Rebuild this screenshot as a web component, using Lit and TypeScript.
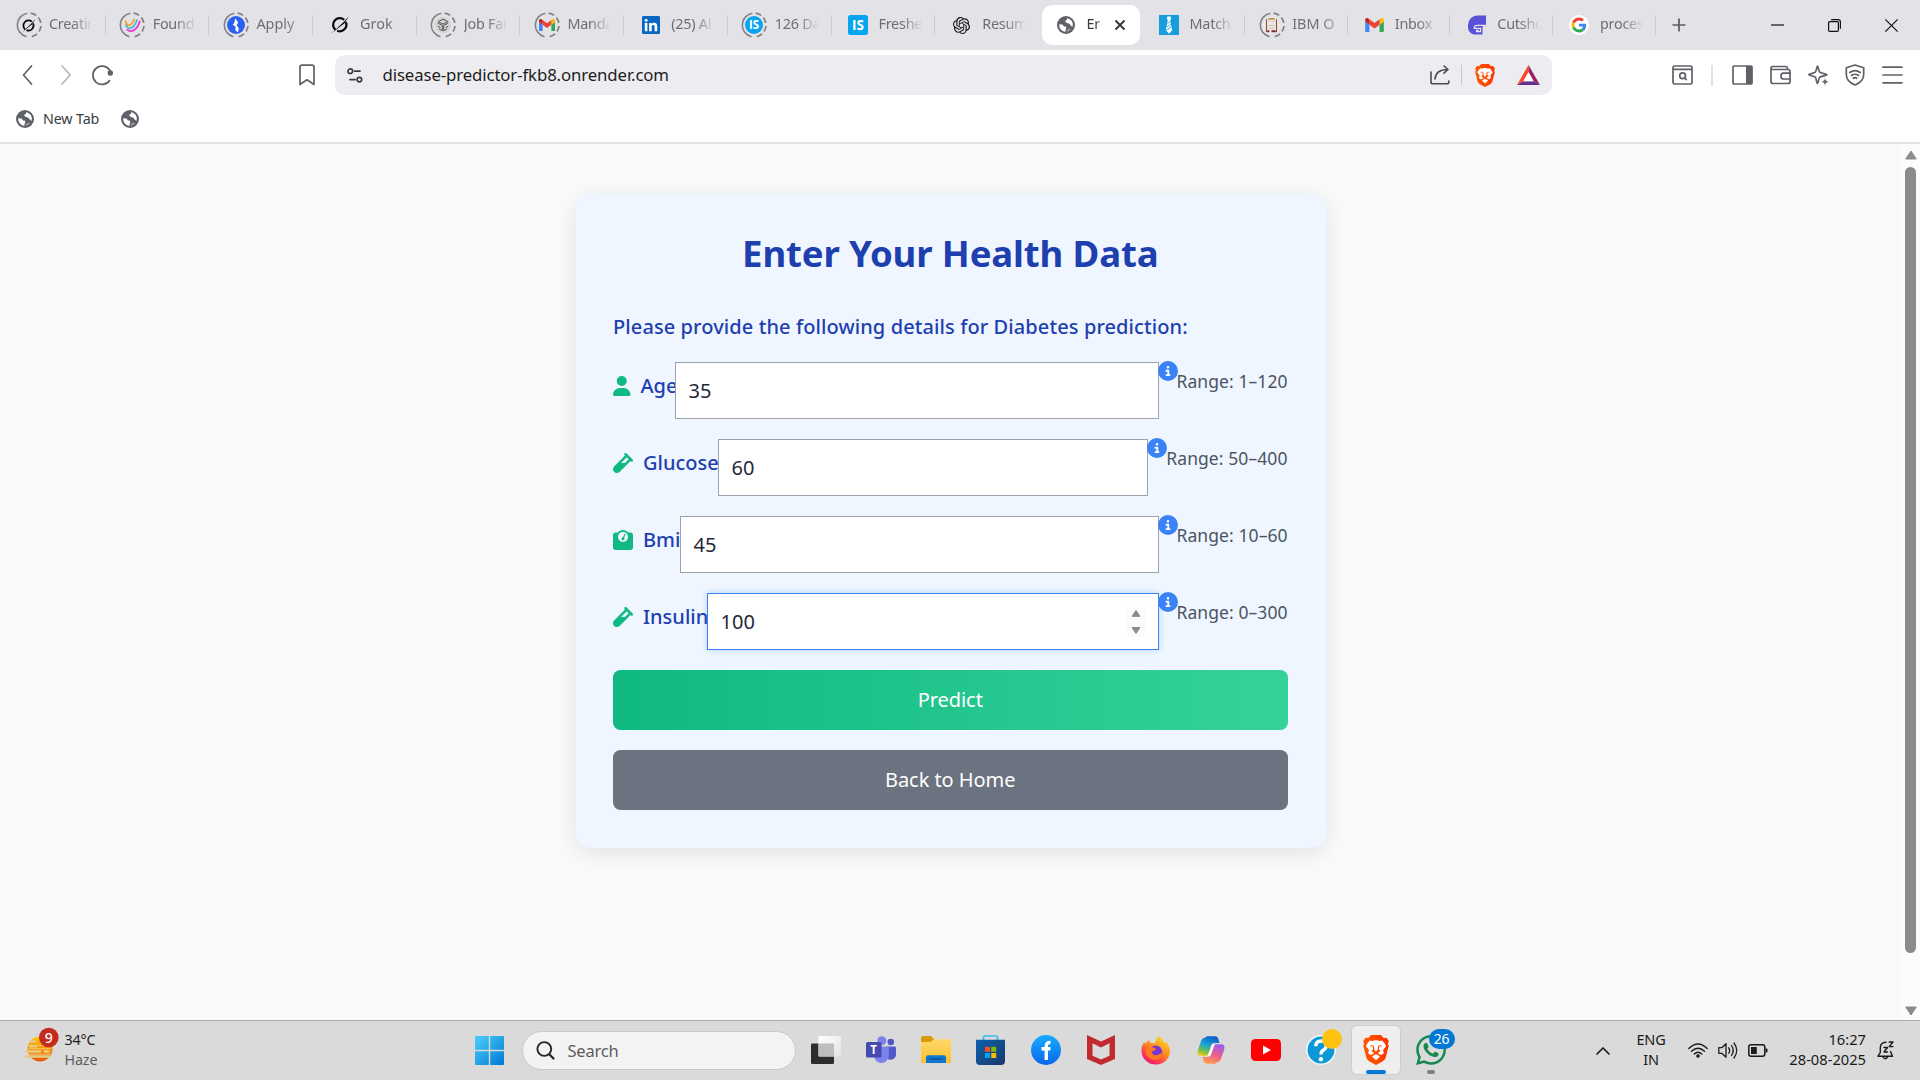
import { LitElement, html, svg, css, TemplateResult, SVGTemplateResult } from "lit";
import { customElement } from "lit/decorators.js";

type Art = SVGTemplateResult;

const icon = (w: number, h: number, box: string, art: Art): TemplateResult =>
  html`<svg class="icon" width=${w} height=${h} viewBox=${box}>${art}</svg>`;

/* ---------- shared artwork ---------- */

const GLOBE: Art = svg`
  <circle cx="9" cy="9" r="9" fill="#5f6168"/>
  <path d="M2.200 8.300 5.400 8.600 7.100 10.600 9.300 10.800 8.900 13.200 8.100 15.900 A7 7 0 0 1 2.200 8.300Z" fill="#fff"/>
  <path d="M10.100 2.200 12 2.800 A7 7 0 0 1 15.900 8 L15.400 10.900 13.500 9.200 12 7.600 9.800 7 8.500 5.800 8 4.700 9.900 4.100Z" fill="#fff"/>
  <path d="M9.800 13.800 12.600 12.400 14.200 13.300 A7 7 0 0 1 9.500 16Z" fill="#fff" opacity=".35"/>`;

const GMAIL: Art = svg`
  <path fill="#4285f4" d="M1.636 18H5.455V8.727L0 4.636V16.364C0 17.27.732 18 1.636 18Z"/>
  <path fill="#34a853" d="M18.545 18h3.819C23.268 18 24 17.268 24 16.364V4.636l-5.455 4.091Z"/>
  <path fill="#fbbc04" d="M18.545 1.636V8.727L24 4.636V2.455C24 .432 21.691-.723 20.073.491Z"/>
  <path fill="#ea4335" d="M5.455 8.727V1.636L12 6.545l6.545-4.909V8.727L12 13.636Z"/>
  <path fill="#c5221f" d="M0 2.455v2.181l5.455 4.091V1.636L3.927.491C2.309-.723 0 .432 0 2.455Z"/>`;

const RING: Art = svg`
  <path d="M12.300 2.200 A12 12 0 0 0 11.500 25.700" fill="none" stroke="#808086" stroke-width="1.600"/>
  <circle cx="14" cy="14" r="12" fill="none" stroke="#808086" stroke-width="1.700" pathLength="100"
    stroke-dasharray="8 4 8 4 8 4 8 100" transform="rotate(-82 14 14)"/>`;

const GROK: Art = svg`
  <path d="M5.300 14.600 A6.400 6.400 0 0 1 13.800 4.700" fill="none" stroke="#0b0b0b" stroke-width="2.200"/>
  <path d="M15.300 6.800 A6.400 6.400 0 0 1 7 15.400" fill="none" stroke="#0b0b0b" stroke-width="2.200"/>
  <path d="M.8 18.600 L12.800 7.200 18.600 .9 13.900 8.200 6.600 13.900Z" fill="#0b0b0b"/>`;

const OPENAI: Art = svg`<path fill="#111" d="M22.2819 9.8211a5.9847 5.9847 0 0 0-.5157-4.9108 6.0462 6.0462 0 0 0-6.5098-2.9A6.0651 6.0651 0 0 0 4.9807 4.1818a5.9847 5.9847 0 0 0-3.9977 2.9 6.0462 6.0462 0 0 0 .7427 7.0966 5.98 5.98 0 0 0 .511 4.9107 6.051 6.051 0 0 0 6.5146 2.9001A5.9847 5.9847 0 0 0 13.2599 24a6.0557 6.0557 0 0 0 5.7718-4.2058 5.9894 5.9894 0 0 0 3.9977-2.9001 6.0557 6.0557 0 0 0-.7475-7.0729zm-9.022 12.6081a4.4755 4.4755 0 0 1-2.8764-1.0408l.1419-.0804 4.7783-2.7582a.7948.7948 0 0 0 .3927-.6813v-6.7369l2.02 1.1686a.071.071 0 0 1 .038.052v5.5826a4.504 4.504 0 0 1-4.4945 4.4944zm-9.6607-4.1254a4.4708 4.4708 0 0 1-.5346-3.0137l.142.0852 4.783 2.7582a.7712.7712 0 0 0 .7806 0l5.8428-3.3685v2.3324a.0804.0804 0 0 1-.0332.0615L9.74 19.9502a4.4992 4.4992 0 0 1-6.1408-1.6464zM2.3408 7.8956a4.485 4.485 0 0 1 2.3655-1.9728V11.6a.7664.7664 0 0 0 .3879.6765l5.8144 3.3543-2.0201 1.1685a.0757.0757 0 0 1-.071 0l-4.8303-2.7865A4.504 4.504 0 0 1 2.3408 7.872zm16.5963 3.8558L13.1038 8.364 15.1192 7.2a.0757.0757 0 0 1 .071 0l4.8303 2.7913a4.4944 4.4944 0 0 1-.6765 8.1042v-5.6772a.79.79 0 0 0-.407-.667zm2.0107-3.0231l-.142-.0852-4.7735-2.7818a.7759.7759 0 0 0-.7854 0L9.409 9.2297V6.8974a.0662.0662 0 0 1 .0284-.0615l4.8303-2.7866a4.4992 4.4992 0 0 1 6.6802 4.66zM8.3065 12.863l-2.02-1.1638a.0804.0804 0 0 1-.038-.0567V6.0742a4.4992 4.4992 0 0 1 7.3757-3.4537l-.142.0805L8.704 5.459a.7948.7948 0 0 0-.3927.6813zm1.0976-2.3654l2.602-1.4998 2.6069 1.4998v2.9994l-2.5974 1.4997-2.6067-1.4997Z"/>`;

const GOOGLE: Art = svg`
  <path fill="#ea4335" d="M24 9.500c3.540 0 6.710 1.220 9.210 3.600l6.850-6.850C35.900 2.380 30.470 0 24 0 14.620 0 6.510 5.380 2.560 13.220l7.980 6.190C12.430 13.720 17.740 9.500 24 9.500z"/>
  <path fill="#4285f4" d="M46.980 24.550c0-1.570-.15-3.090-.38-4.550H24v9.020h12.940c-.58 2.960-2.260 5.480-4.780 7.180l7.730 6c4.510-4.180 7.090-10.360 7.090-17.650z"/>
  <path fill="#fbbc05" d="M10.530 28.590c-.48-1.450-.76-2.990-.76-4.590s.27-3.140.76-4.590l-7.980-6.190C.92 16.460 0 20.120 0 24c0 3.880.92 7.540 2.560 10.780l7.970-6.190z"/>
  <path fill="#34a853" d="M24 48c6.480 0 11.930-2.130 15.890-5.810l-7.730-6c-2.150 1.450-4.920 2.300-8.160 2.300-6.260 0-11.570-4.220-13.470-9.910l-7.980 6.190C6.510 42.620 14.620 48 24 48z"/>`;

/* Brave lion, 26 x 30 */
const BRAVE: Art = svg`
  <defs><linearGradient id="lion" x1="0" y1="0" x2="1" y2="0">
    <stop offset="0" stop-color="#ff5500"/><stop offset=".5" stop-color="#ff4a00"/><stop offset="1" stop-color="#ff2f00"/>
  </linearGradient></defs>
  <path fill="url(#lion)" d="M8 0h10l2.700 3 2.700-.3L25.800 6l-.9 2.500.8 2.400-3 11.700c-.5 1.700-1.500 2.700-2.900 3.700L13 30l-6.800-3.700c-1.400-1-2.400-2-2.900-3.700L.3 10.900l.8-2.400L.2 6l2.400-3.300 2.700.3Z"/>
  <path fill="#fff" d="M13 5.300c.9 0 3.200.7 3.900.6.700 0 2.300-.4 2.300-.4s3.800 4.300 3.800 5.300c0 .9-1.100 1.900-1.800 2.700-.6.600-1.300 1.200-1 2 .2.700.9 1.700.3 2.700-.6 1.100-1.700 1.700-2.500 1.600-.8-.2-2.500-1.100-3-1.600-.3-.4 1.700-1.500 2.700-2.200.2-.2-.8-.9-1.800-1.500-.3-.4.700-2.600.4-3.100-.4-.5-2-.8-3.300-.8s-2.900.3-3.300.8c-.3.500.7 2.700.4 3.100-1 .6-2 1.300-1.800 1.500 1 .7 3 1.800 2.700 2.200-.5.500-2.200 1.400-3 1.600-.8.100-1.900-.5-2.500-1.600-.6-1 .1-2 .3-2.700.3-.8-.4-1.400-1-2-.7-.8-1.800-1.800-1.800-2.700 0-1 3.800-5.300 3.800-5.300s1.600.4 2.300.4c.7.1 3-.6 3.900-.6Z"/>
  <path fill="#fff" d="M10.600 9.800 15.400 9.800 14.500 15 13 16.700 11.500 15Z"/>
  <path fill="#fff" d="M13 19.300c.9.400 3.200 1.600 3.600 2 .3.300.1.600-.1.800L13 25.300l-3.500-3.200c-.2-.2-.4-.5-.1-.8.400-.4 2.700-1.600 3.600-2Z"/>
  <path d="M7.200 11.200c1.200-.7 2.300-.6 3.400 0M18.800 11.200c-1.200-.7-2.300-.6-3.400 0" fill="none" stroke="#ff4a00" stroke-width="1"/>`;

/* ---------- tab strip ---------- */

interface Tab { label: string; art: TemplateResult; ringed?: boolean; active?: boolean; bare?: boolean; whole?: boolean; }

const tabs: Tab[] = [
  { label: "Creatin", ringed: true, art: icon(15, 15, "0 0 19 19", GROK) },
  { label: "Found", ringed: true, art: icon(17, 17, "0 0 18 18", svg`
      <path d="M1.500 3.500C3 11.500 7.500 10 11 2" fill="none" stroke="#f8a51b" stroke-width="1.900"/>
      <path d="M1.500 8C4.500 15 10.500 12.500 14 2.500" fill="none" stroke="#3fb3ea" stroke-width="1.700"/>
      <path d="M3 13.200C7.500 17.500 14.500 13.500 16.800 4" fill="none" stroke="#e838c9" stroke-width="1.900"/>`) },
  { label: "Apply", ringed: true, whole: true, art: icon(18, 18, "0 0 18 18", svg`
      <circle cx="9" cy="9" r="9" fill="#2a5ff0"/>
      <path d="M8.300 2.300 7 7.400 5.600 8.500 8.600 10.800 8.400 14.500 11 16.200 11.800 12.200 9.600 9.300 11.200 6.400Z" fill="#fff"/>`) },
  { label: "Grok", whole: true, art: icon(20, 20, "0 0 19.500 19.500", GROK) },
  { label: "Job Fai", ringed: true, art: icon(16, 16, "0 0 16 16", svg`
      <circle cx="8" cy="8" r="8" fill="#d3d3d3"/>
      <path d="M8 2.200 12.800 4.600 8 7.200 3.200 4.600ZM2.800 6 7.300 8.500V13.800L4 11.800M13.200 6 8.700 8.500V13.800L12 11.800M2.800 9.200 5.400 10.600M13.200 9.200 10.600 10.600" fill="none" stroke="#555" stroke-width="1"/>`) },
  { label: "Manda", ringed: true, art: icon(16, 12, "0 0 24 18", GMAIL) },
  { label: "(25) Al", art: icon(18, 18, "0 0 18 18", svg`
      <rect width="18" height="18" rx="1.200" fill="#0a66c2"/>
      <circle cx="4.100" cy="4.300" r="1.500" fill="#fff"/><rect x="2.800" y="6.900" width="2.600" height="8.300" fill="#fff"/>
      <path d="M7.100 6.900h2.500V8c.5-.8 1.400-1.300 2.500-1.300 2.500 0 3.100 1.600 3.100 3.800v4.700h-2.600V11c0-1-.1-2.100-1.400-2.100S9.700 9.900 9.700 11v4.200H7.100Z" fill="#fff"/>`) },
  { label: "126 Da", ringed: true, art: icon(18, 18, "0 0 18 18", svg`
      <circle cx="9" cy="9" r="9" fill="#07a5f0"/><text x="9" y="13.200" class="glyph" font-size="11.500">IS</text>`) },
  { label: "Freshe", art: icon(20, 20, "0 0 20 20", svg`
      <rect width="20" height="20" rx="2.500" fill="#07a5f0"/><text x="10" y="15" class="glyph" font-size="13.500">IS</text>`) },
  { label: "Resum", bare: true, art: icon(17, 17, "0 0 24 24", OPENAI) },
  { label: "Er", active: true, art: icon(18, 18, "0 0 18 18", GLOBE) },
  { label: "Match", art: icon(20, 20, "0 0 20 20", svg`
      <rect width="20" height="20" fill="#179cdc"/>
      <path d="M8.400 1.500h3.200l.6 2-1 1.700 1.900 10L10 18.700 6.900 15.200l1.900-10-1-1.700Z" fill="#fff"/>
      <path d="M8.600 8.600 11.400 6.200M8 12.200 12 8.900M7.400 15.500 12.400 11.600" stroke="#179cdc" stroke-width=".9"/>`) },
  { label: "IBM O", ringed: true, whole: true, art: icon(17, 17, "0 0 16 16", svg`
      <circle cx="8" cy="8" r="8" fill="#efe9e4"/>
      <path d="M3.300 2V14M12.700 2V14" stroke="#8b4a46" stroke-width="1"/>
      <path d="M5 4.200h2M9 4.200h2M5 8h6M5.500 10.500h5" stroke="#cdb8a4" stroke-width=".9"/>
      <path d="M4 13.500h2M8 13.500h4" stroke="#7d2a2e" stroke-width="1.900"/><path d="M5 1.800h6" stroke="#b98b3c" stroke-width="1.500"/>`) },
  { label: "Inbox", art: icon(19, 14, "0 0 24 18", GMAIL) },
  { label: "Cutsho", art: icon(18, 20, "0 0 18 20", svg`
      <path d="M18 .5H9.500A9.500 9.500 0 0 0 0 10V12.500A7 7 0 0 0 7 19.500H14.500V11.500H18Z" fill="#5850d6"/>
      <path d="M18 10.300H9.300Q6.300 10.300 6.300 12.800V13.300H12.500V16.700H8.500V15.300H10.800" fill="none" stroke="#e3e2e7" stroke-width="1.300"/>
      <path d="M18 11.100H15V20H18Z" fill="#e3e2e7"/>`) },
  { label: "proces", art: icon(20, 20, "-8 -8 64 64", svg`<circle cx="24" cy="24" r="32" fill="#fff"/>${GOOGLE}`) },
];

/* ---------- form data ---------- */

const PERSON = icon(17.5, 20, "0 0 448 512", svg`<path fill="#10b981" d="M224 256A128 128 0 1 0 224 0a128 128 0 1 0 0 256zm-45.700 48C79.800 304 0 383.800 0 482.300C0 498.700 13.300 512 29.700 512H418.300c16.400 0 29.700-13.300 29.700-29.700C448 383.800 368.200 304 269.700 304H178.300z"/>`);
const VIAL = icon(20, 20, "0 0 512 512", svg`<path fill="#10b981" d="M342.600 9.400c-12.500-12.500-32.800-12.500-45.300 0s-12.500 32.800 0 45.300l9.400 9.400L28.100 342.600C10.100 360.600 0 385 0 410.500V416c0 53 43 96 96 96h5.500c25.500 0 49.900-10.100 67.900-28.100L448 205.300l9.400 9.400c12.500 12.500 32.800 12.500 45.300 0s12.500-32.800 0-45.300l-32-32-96-96-32-32zM205.300 256L352 109.300 402.700 160l-96 96H205.300z"/>`);
const SCALE = icon(20, 20, "0 0 512 512", svg`<path fill="#10b981" d="M128 176a128 128 0 1 1 256 0 128 128 0 1 1 -256 0zM391.800 64C359.500 24.900 310.700 0 256 0S152.500 24.900 120.200 64H64C28.700 64 0 92.700 0 128V448c0 35.300 28.700 64 64 64H448c35.300 0 64-28.700 64-64V128c0-35.300-28.700-64-64-64H391.800zM296 224c0-10.600-4.100-20.200-10.900-27.400l33.600-78.300c3.500-8.100-.3-17.500-8.400-21s-17.500 .3-21 8.400L255.700 184c-22 .1-39.700 18-39.700 40c0 22.100 17.900 40 40 40s40-17.900 40-40z"/>`);
const INFO = icon(20, 20, "0 0 512 512", svg`<circle cx="256" cy="256" r="240" fill="#fff"/><path fill="#3b82f6" d="M256 512A256 256 0 1 0 256 0a256 256 0 1 0 0 512zM216 336h24V272H216c-13.300 0-24-10.700-24-24s10.700-24 24-24h48c13.300 0 24 10.700 24 24v88h8c13.300 0 24 10.700 24 24s-10.700 24-24 24H216c-13.300 0-24-10.700-24-24s10.700-24 24-24zm40-208a32 32 0 1 1 0 64 32 32 0 1 1 0-64z"/>`);

const fields = [
  { name: "Age", value: "35", range: "Range: 1–120", kind: "age", art: PERSON },
  { name: "Glucose", value: "60", range: "Range: 50–400", kind: "glucose", art: VIAL },
  { name: "Bmi", value: "45", range: "Range: 10–60", kind: "bmi", art: SCALE },
  { name: "Insulin", value: "100", range: "Range: 0–300", kind: "insulin", art: VIAL },
];

/* ---------- taskbar apps ---------- */

const START = icon(29, 29, "0 0 29 29", svg`
  <defs><linearGradient id="win" x1="0" y1="0" x2="1" y2="1" gradientUnits="objectBoundingBox">
    <stop offset="0" stop-color="#4cd0fb"/><stop offset="1" stop-color="#0078d4"/></linearGradient>
    <mask id="panes"><path d="M0 1Q0 0 1 0H13.800V13.800H0ZM15.200 0H28Q29 0 29 1V13.800H15.200ZM0 15.200H13.800V29H1Q0 29 0 28ZM15.200 15.200H29V28Q29 29 28 29H15.200Z" fill="#fff"/></mask></defs>
  <rect width="29" height="29" fill="url(#win)" mask="url(#panes)"/>`);

const apps: { art: TemplateResult; kind?: string }[] = [
  { art: icon(30, 29, "0 0 30 29", svg`
      <defs><linearGradient id="tvw" x1="0" y1="0" x2="1" y2="1"><stop offset="0" stop-color="#fff"/><stop offset="1" stop-color="#e2e2e2"/></linearGradient></defs>
      <rect x="0" y="7.500" width="23" height="20.500" rx="1.200" fill="#2c2c2a"/>
      <rect x="7.500" y="0" width="22.500" height="20.500" rx="1.200" fill="url(#tvw)"/>
      <path d="M7.500 7.500H23V20.500H8.500Q7.500 20.500 7.500 19.500Z" fill="#bdbdbd"/>`) },
  { art: icon(30, 28, "0 0 30 28", svg`
      <circle cx="24.800" cy="6" r="3.300" fill="#5059c9"/><path d="M20 10.500h8.500q1.500 0 1.500 1.500v6.500a5.500 5.500 0 0 1-9 4Z" fill="#5059c9"/>
      <circle cx="15.800" cy="4.700" r="4.500" fill="#7b83eb"/><path d="M9 10.500h12.500q1.300 0 1.300 1.500v7.500a7.400 7.400 0 0 1-14.800 0Z" fill="#7b83eb"/>
      <rect x="0" y="6" width="15.500" height="15.500" rx="1.500" fill="#4649b0"/><text x="7.700" y="17.800" class="glyph" font-size="11.500">T</text>`) },
  { art: icon(30, 28, "0 0 30 28", svg`
      <defs><linearGradient id="fold" x1="0" y1="0" x2="0" y2="1"><stop offset="0" stop-color="#ffd96b"/><stop offset="1" stop-color="#fbbf2d"/></linearGradient></defs>
      <path d="M0 2Q0 0 2 0H10L13 3V8H0Z" fill="#d99a0b"/><path d="M0 6H9.500L13 3.200H30V27H0Z" fill="url(#fold)"/>
      <path d="M5 27V21.500Q5 19.300 7.200 19.300H22.800Q25 19.300 25 21.500V27Z" fill="#0f78ce"/><path d="M8.500 23H21.500" stroke="#0a4f94" stroke-width="1.300"/>`) },
  { art: icon(29, 30, "0 0 29 30", svg`
      <defs><linearGradient id="bag" x1="0" y1="0" x2="1" y2="1"><stop offset="0" stop-color="#0b62ad"/><stop offset="1" stop-color="#1b3768"/></linearGradient></defs>
      <path d="M7.500 6V2.500Q7.500 1 9 1H20Q21.500 1 21.500 2.500V6" fill="none" stroke="#33bdf2" stroke-width="1.700"/>
      <path d="M0 4.700H29V26Q29 30 25 30H4Q0 30 0 26Z" fill="url(#bag)"/>
      <path d="M9 11.800H14V16.800H9Z" fill="#f25022"/><path d="M15.200 11.800H20.200V16.800H15.200Z" fill="#7fba00"/>
      <path d="M9 18H14V23H9Z" fill="#00a4ef"/><path d="M15.200 18H20.200V23H15.200Z" fill="#ffb900"/>`) },
  { art: icon(30, 30, "0 0 30 30", svg`
      <defs><linearGradient id="fb" x1="0" y1="0" x2="0" y2="1"><stop offset="0" stop-color="#18acfe"/><stop offset="1" stop-color="#0866ea"/></linearGradient></defs>
      <circle cx="15" cy="15" r="15" fill="url(#fb)"/>
      <path d="M15.300 25V11Q15.300 7.300 19.500 7.500M10.500 13.800H19.500" fill="none" stroke="#fff" stroke-width="3.400"/>`) },
  { art: icon(28, 30, "0 0 28 30", svg`
      <path d="M0 0 14 6.500 28 0V24L14 30 0 24ZM5.500 8.300V20.800L14 24.500 22.500 20.800V8.300L14 12.500Z" fill="#c12a2e" fill-rule="evenodd"/>`) },
  { art: icon(29, 29, "0 0 29 29", svg`
      <defs><linearGradient id="fx" x1=".8" y1="0" x2=".2" y2="1"><stop offset="0" stop-color="#ffe12e"/><stop offset=".45" stop-color="#ff8a1c"/><stop offset=".8" stop-color="#fb2f55"/><stop offset="1" stop-color="#e31587"/></linearGradient></defs>
      <path d="M18 .300C21 2 22.600 4.500 23 7 24 6.900 24.700 6.300 25 5.500 28 9 29 12.500 29 15.500A14.300 14 0 0 1 .5 16C0 11.500 1.500 8 3.500 6 3.600 7 4 7.600 4.600 8 5.500 5.800 7 4.600 8.600 4.200 8.600 5.800 9.400 7 11 7.200 14 7.500 14.500 6 15 4.500 15.500 2.600 16.500 1 18 .300Z" fill="url(#fx)"/>
      <circle cx="14.700" cy="16" r="6.500" fill="#7a35d8"/>
      <path d="M5 12.500C8.500 10 13.500 11.200 15.500 13.500 12.500 13.800 12.200 15.500 10.500 16.200 12 20 17 20.500 20.500 16.500 21.500 22.500 15 25.500 10 23.200 6 21.200 4.500 17 5 12.500Z" fill="#ff7a1c"/>`) },
  { art: icon(28, 28, "0 0 28 28", svg`
      <defs><linearGradient id="cpa" x1=".6" y1="0" x2=".2" y2="1"><stop offset="0" stop-color="#0f5fc9"/><stop offset=".45" stop-color="#18a5d6"/><stop offset=".75" stop-color="#6fbf4b"/><stop offset="1" stop-color="#f2c80f"/></linearGradient>
      <linearGradient id="cpb" x1=".7" y1="0" x2=".3" y2="1"><stop offset="0" stop-color="#9d5cf0"/><stop offset=".5" stop-color="#ec5f8c"/><stop offset="1" stop-color="#ff9d4a"/></linearGradient></defs>
      <path d="M8.500 1.500Q9 .3 11 .3H18Q20.500.3 21.300 2.700L22.500 7H17Q14.800 7 14 9.500L11.800 17.500Q11.200 19.700 9 19.700H4Q-.5 19.700 .8 14.500L4 5Q5 2 8.500 1.500Z" fill="url(#cpa)"/>
      <path d="M19.500 26.500Q19 27.700 17 27.700H10Q7.500 27.700 6.700 25.300L5.500 21H11Q13.200 21 14 18.500L16.200 10.500Q16.800 8.300 19 8.300H24Q28.500 8.300 27.200 13.500L24 23Q23 26 19.500 26.500Z" fill="url(#cpb)"/>
      <path d="M15.300 8.300H18L13.500 19.700H10.300Z" fill="#fff" opacity=".8"/>`) },
  { art: icon(30, 22, "0 0 30 22", svg`
      <rect width="30" height="22" rx="4.500" fill="#f00"/><path d="M12 6.500 20 11 12 15.500Z" fill="#fff"/>`) },
  { kind: "help", art: icon(30, 30, "0 0 30 30", svg`
      <circle cx="15" cy="15" r="14.200" fill="#0c97d6" stroke="#f1f8fc" stroke-width="1.600"/>
      <path d="M9.800 11.200Q9.800 6 15 6T20.200 10.700Q20.200 13.500 17.200 15.200 15 16.500 15 19.500" fill="none" stroke="#fff" stroke-width="3.400"/><circle cx="14.900" cy="24.300" r="2.200" fill="#fff"/>`) },
  { kind: "current", art: icon(26, 30, "0 0 26 30", BRAVE) },
  { kind: "chat", art: icon(30, 30, "0 0 24 24", svg`<path fill="#15894f" d="M17.472 14.382c-.297-.149-1.758-.867-2.030-.967-.273-.099-.471-.148-.67.15-.197.297-.767.966-.94 1.164-.173.199-.347.223-.644.075-.297-.15-1.255-.463-2.390-1.475-.883-.788-1.480-1.761-1.653-2.059-.173-.297-.018-.458.13-.606.134-.133.298-.347.446-.52.149-.174.198-.298.298-.497.099-.198.05-.371-.025-.52-.075-.149-.669-1.612-.916-2.207-.242-.579-.487-.5-.669-.51-.173-.008-.371-.01-.57-.01-.198 0-.52.074-.792.372-.272.297-1.040 1.016-1.040 2.479 0 1.462 1.065 2.875 1.213 3.074.149.198 2.096 3.200 5.077 4.487.709.306 1.262.489 1.694.625.712.227 1.360.195 1.871.118.571-.085 1.758-.719 2.006-1.413.248-.694.248-1.289.173-1.413-.074-.124-.272-.198-.57-.347m-5.421 7.403h-.004a9.870 9.870 0 01-5.031-1.378l-.361-.214-3.741.982.998-3.648-.235-.374a9.860 9.860 0 01-1.510-5.260c.001-5.450 4.436-9.884 9.888-9.884 2.640 0 5.122 1.030 6.988 2.898a9.825 9.825 0 012.893 6.994c-.003 5.450-4.437 9.884-9.885 9.884m8.413-18.297A11.815 11.815 0 0012.050 0C5.495 0 .16 5.335.157 11.892c0 2.096.547 4.142 1.588 5.945L.057 24l6.305-1.654a11.882 11.882 0 005.683 1.448h.005c6.554 0 11.890-5.335 11.893-11.893a11.821 11.821 0 00-3.480-8.413Z"/>`) },
];

@customElement("app-root")
export class AppRoot extends LitElement {
  static styles = css`
    :host { display: block; font-family: "Noto Sans", "Open Sans", sans-serif; color: #1f2023; }
    * { box-sizing: border-box; }
    .screen { width: 1920px; height: 1080px; display: flex; flex-direction: column; overflow: hidden; }
    .icon { display: block; flex: none; overflow: visible; }
    .line { fill: none; stroke: #5f6168; stroke-width: 1.7; stroke-linecap: round; stroke-linejoin: round; }
    .glyph { fill: #fff; font-family: "Open Sans", sans-serif; font-weight: 700; text-anchor: middle; }

    .tabs { height: 50px; flex: none; display: flex; align-items: center; background: #e3e2e7; padding-left: 2px; }
    .tab { width: 103.700px; height: 40px; flex: none; display: flex; align-items: center; padding-left: 12.500px; }
    .tab.late { width: 102.600px; }
    .tab.edge { border-right: 1.500px solid #cbcace; height: 20px; }
    .fav { width: 28px; height: 28px; display: grid; place-items: center; flex: none; }
    .fav > * { grid-area: 1 / 1; }
    .title { margin: 0 0 2px 6.500px; width: 46px; white-space: nowrap; font-size: 14.400px; letter-spacing: -0.250px; line-height: 22px; color: #6e6f73;
      -webkit-mask-image: linear-gradient(90deg, #000 50%, transparent 96%); mask-image: linear-gradient(90deg, #000 50%, transparent 96%); }
    .title.whole { letter-spacing: 0; -webkit-mask-image: linear-gradient(90deg, #000 60%, transparent 125%); mask-image: linear-gradient(90deg, #000 60%, transparent 125%); }
    .active { width: 98px; height: 40px; margin: 0 2.700px 0 3px; padding-left: 10px; background: #fff; border-radius: 10px; }
    .active .title { width: 16px; color: #3a3b3f; -webkit-mask-image: linear-gradient(90deg, #000 60%, transparent 115%); mask-image: linear-gradient(90deg, #000 60%, transparent 115%); }
    .active .close { margin-left: 12px; }
    .plus { margin-left: 16px; }
    .win { margin-left: auto; display: flex; align-items: center; gap: 44px; padding-right: 22px; }

    .bar { height: 50px; flex: none; display: flex; align-items: center; background: #fff; padding-left: 22px; }
    .fwd { margin-left: 28px; }
    .reload { margin-left: 20px; }
    .mark { margin-left: 186px; }
    .url { width: 1217px; height: 40px; margin-left: 20px; border-radius: 10px; background: #ededf1; display: flex; align-items: center; padding-left: 12px; }
    .address { margin-left: 19.500px; font-size: 16.800px; letter-spacing: -0.120px; line-height: 26px; color: #1d1d22; flex: 1; padding-bottom: 1px; }
    .sep { width: 1.500px; height: 20px; background: #c6c6cb; margin: 0 13px 0 11px; }
    .bat { margin: 0 12px 0 22px; }
    .find { margin-left: 120px; }
    .sep.soft { width: 2px; margin: 0 19px 0 18px; background: #e2e1e7; height: 21px; }
    .tools { display: flex; align-items: center; gap: 16.800px; }

    .marks { height: 44px; flex: none; display: flex; align-items: center; background: #fff; border-bottom: 2px solid #e2e1e7; padding: 0 0 5px 16px; font-size: 14.300px; color: #3c3d41; }
    .marks span { margin: 0 22px 0 9px; letter-spacing: -0.150px; }

    .page { flex: 1; min-height: 0; display: flex; background: #f9fafc; }
    .body { flex: 1; display: flex; justify-content: center; align-items: flex-start; padding-top: 50px; }
    .card { width: 750px; height: 654px; padding: 35px 38px 0 37.500px; border-radius: 15px; background: #eff6ff; box-shadow: 0 5px 25px rgba(0, 0, 0, 0.100); }
    h1 { margin: 0; text-align: center; font-size: 36.600px; line-height: 48px; letter-spacing: -0.150px; font-weight: 700; color: #1e40af; }
    .lead { margin: 35px 0 20px; font-size: 20px; line-height: 30px; font-weight: 500; letter-spacing: 0.100px; color: #1e40af; white-space: nowrap; }
    .row { display: flex; align-items: flex-start; height: 57px; margin-bottom: 20px; }
    .label { flex: none; display: flex; align-items: center; gap: 10px; margin-top: 9px; font-size: 20px; font-weight: 500; line-height: 30px; color: #1e40af; white-space: nowrap; }
    .label .icon { margin-bottom: 1px; }
    .age .label { width: 61.500px; } .glucose .label { width: 104.500px; } .bmi .label { width: 66.500px; } .insulin .label { width: 93.500px; }
    .input { flex: 1; height: 57px; display: flex; align-items: center; justify-content: space-between; background: #fff; border: 1px solid #9ca3af; padding: 0 13px 0 13px; font-size: 20px; line-height: 30px; color: #1f2937; }
    .insulin .input { border-color: #3b82f6; box-shadow: 0 0 6px rgba(59, 130, 246, 0.300); }
    .spin { display: block; background: #fbfbfb; }
    .info { width: 18px; flex: none; margin-top: -1px; }
    .info .icon { margin-left: -1px; }
    .range { flex: none; width: 111px; margin-top: 5.500px; font-size: 17.500px; letter-spacing: 0.080px; line-height: 26px; color: #4b5563; text-align: right; white-space: nowrap; }
    .glucose .range { width: 121.500px; }
    .btn { height: 60px; border-radius: 7.500px; display: flex; align-items: center; justify-content: center; font-size: 20px; line-height: 30px; color: #fff; margin-bottom: 20px; letter-spacing: -0.050px; }
    .go { background: linear-gradient(90deg, #10b981, #34d399); }
    .home { background: #6b7280; }
    .scroll { width: 19px; flex: none; background: #fcfcfc; display: flex; flex-direction: column; align-items: center; padding: 6px 0 4px; }
    .thumb { width: 11px; height: 786px; margin-top: 7px; border-radius: 6px; background: #8b8b8b; }
    .scroll .down { margin-top: auto; }

    .task { height: 60px; flex: none; display: flex; align-items: center; background: #dadada; border-top: 1px solid #aaabad; padding-bottom: 1px; }
    .weather { width: 460.500px; flex: none; padding-left: 25px; display: flex; align-items: center; font-size: 14.300px; line-height: 20px; letter-spacing: -0.150px; }
    .weather .icon { margin-bottom: 10px; }
    .grey { color: #5c5c5c; }
    .weather .words { margin: 0 0 0 5.500px; }
    .start { width: 61px; padding-left: 14.500px; flex: none; }
    .search { width: 274px; height: 39px; flex: none; border-radius: 20px; background: #f3f3f3; border: 1px solid #c9c9c9; display: flex; align-items: center; padding-left: 13px; font-size: 16.500px; color: #5d5d5d; letter-spacing: -0.200px; }
    .search span { margin-left: 13px; }
    .apps { display: flex; gap: 7px; margin-left: 6px; }
    .app { width: 48px; height: 48px; display: grid; place-items: center; border-radius: 5px; position: relative; }
    .current { background: #eeeeee; box-shadow: 0 0 0 1px rgba(0, 0, 0, 0.050); }
    .current::after { content: ""; position: absolute; left: 14px; bottom: 0; width: 20px; height: 4px; border-radius: 2px; background: #0078d4; }
    .chat::after { content: ""; position: absolute; left: 20px; bottom: 0; width: 8px; height: 4px; border-radius: 2px; background: #7f7f7f; }
    .help::after { content: ""; position: absolute; left: 25px; top: 3px; width: 20px; height: 20px; border-radius: 50%; background: #ffc20e; }
    .badge { position: absolute; left: 22px; top: 3px; width: 26px; height: 20px; border-radius: 10px; background: #0078d4; color: #fff; font-size: 14px; line-height: 20px; text-align: center; letter-spacing: -0.300px; }
    .tray { margin-left: auto; padding-right: 26px; display: flex; align-items: center; font-size: 14.500px; line-height: 20px; color: #1b1b1b; }
    .lang { width: 40px; margin: 0 17px 2px 21px; text-align: center; letter-spacing: -0.200px; }
    .net { display: flex; align-items: center; gap: 10px; }
    .clock { width: 90px; margin: 0 11px 2px 8px; text-align: right; font-size: 14.700px; white-space: nowrap; }
  `;

  private tab(t: Tab, i: number) {
    const edge = !t.active && !t.bare;
    if (t.active) {
      return html`<div class="tab active">
        <span class="fav">${t.art}</span><span class="title">${t.label}</span>
        <svg class="icon close" width="12" height="12" viewBox="0 0 12 12"><path d="M1.500 1.500 10.500 10.500M10.500 1.500 1.500 10.500" stroke="#34353a" stroke-width="1.900"/></svg>
      </div>`;
    }
    return html`<div class="tab ${i > 10 ? "late" : ""} ${edge ? "edge" : ""}">
      <span class="fav">${t.art}${t.ringed ? icon(28, 28, "0 0 28 28", RING) : ""}</span>
      <span class="title ${t.whole ? "whole" : ""}">${t.label}</span>
    </div>`;
  }

  private toolbar() {
    return html`<div class="bar">
      ${icon(11, 20, "0 0 11 20", svg`<path class="line" d="M9.500 1 1.500 10 9.500 19"/>`)}
      <span class="fwd">${icon(11, 20, "0 0 11 20", svg`<path class="line" opacity=".45" d="M1 1 9.200 10 1 19"/>`)}</span>
      <span class="reload">${icon(21, 20, "0 0 21 20", svg`<path class="line" d="M17.600 15.600A9.200 9.200 0 1 1 17.800 5.200"/><circle cx="18.300" cy="8" r="2.700" fill="#5f6168"/>`)}</span>
      <span class="mark">${icon(16, 22, "0 0 16 22", svg`<path class="line" d="M3 1.200H13Q15 1.200 15 3.200V20.500L8 15.800 1 20.500V3.200Q1 1.200 3 1.200Z"/>`)}</span>
      <div class="url">
        ${icon(16, 15, "0 0 16 15", svg`<g fill="none" stroke="#3a3b40" stroke-width="1.700" stroke-linecap="round"><circle cx="3.300" cy="3.200" r="2.300"/><path d="M7.600 3.200H13"/><circle cx="12.400" cy="11.600" r="2.300"/><path d="M3 11.600H8.200"/></g>`)}
        <span class="address">disease-predictor-fkb8.onrender.com</span>
        ${icon(20, 20, "0 0 20 20", svg`<g fill="none" stroke="#4a4b50" stroke-width="1.600" stroke-linecap="round" stroke-linejoin="round"><path d="M1 7V17Q1 18.800 2.800 18.800H17Q18.800 18.800 18.800 17V16"/><path d="M5 14C5.500 8 9.500 4.500 17.500 4.500M14 1 18 4.500 14 8.200"/></g>`)}
        <span class="sep"></span>
        ${icon(20, 23, "0 0 26 30", BRAVE)}
        <span class="bat">${icon(23, 20, "0 0 23 20", svg`<path d="M11.500 0 0 20 6.300 16.200 11.500 7Z" fill="#ff4724"/><path d="M11.500 0 23 20 16.500 16.200 11.500 7Z" fill="#9e1f63"/><path d="M0 20H23L16.500 16.200H6.300Z" fill="#662d91"/><path d="M11.500 7.200 16.600 16.200H6.400Z" fill="#fff"/>`)}</span>
      </div>
      <span class="find">${icon(21, 20, "0 0 21 20", svg`<rect class="line" x="1" y="1" width="19" height="18" rx="1.500"/><path class="line" d="M1.500 4.300H19.500"/><circle class="line" cx="10.600" cy="10.800" r="2.900"/><path class="line" d="M12.800 13 14.300 14.700"/>`)}</span>
      <span class="sep soft"></span>
      <div class="tools">
        ${icon(21, 20, "0 0 21 20", svg`<rect class="line" x="1" y="1" width="19" height="18" rx="1"/><path d="M14 1H20V19H14Z" fill="#5f6168"/>`)}
        ${icon(21, 20, "0 0 21 20", svg`<path class="line" d="M17.500 4.500V3.500Q17.500 1.500 15.500 1.500H2.500Q1 1.500 1 3T2.500 4.500H18Q20 4.500 20 6.500V16.500Q20 18.500 18 18.500H3Q1 18.500 1 16.500V3"/><path class="line" d="M20 8.200H13.500Q11 8.200 11 10.700V11.500Q11 14 13.500 14H20"/>`)}
        ${icon(21, 21, "0 0 21 21", svg`<path class="line" d="M9.500 1C10.300 1 10.500 6 11.700 7.200S19 8.800 19 9.700 13 11 11.700 12.200 10.500 18.500 9.500 18.500 8.500 13.500 7.300 12.200 .8 10.600 .8 9.700 6 8.500 7.300 7.200 8.700 1 9.500 1Z"/><path d="M17 12.800 18.200 15.600 21 16.800 18.200 18 17 21 15.800 18 13 16.800 15.800 15.600Z" fill="#5f6168" stroke="#fff" stroke-width=".6"/>`)}
        ${icon(20, 22, "0 0 20 22", svg`<path class="line" d="M10 1 18.700 3.800V10.500Q18.700 17.500 10 21 1.300 17.500 1.300 10.500V3.800Z"/><path class="line" d="M4.800 8.500Q10 4.800 15.200 8.500M6.500 11.500Q10 9 13.500 11.500M8.300 14.300Q10 13 11.700 14.300"/>`)}
        ${icon(21, 18, "0 0 21 18", svg`<path class="line" d="M1 1.200H20M1 9H20M1 16.800H20"/>`)}
      </div>
    </div>`;
  }

  private taskbar() {
    return html`<div class="task">
      <div class="weather">
        ${icon(34, 36, "0 0 34 36", svg`
          <defs><linearGradient id="sun" x1="0" y1="0" x2="0" y2="1"><stop offset="0" stop-color="#ffc800"/><stop offset="1" stop-color="#ea5a0c"/></linearGradient></defs>
          <circle cx="15" cy="22" r="12.500" fill="url(#sun)"/>
          <path d="M6 14.500H10M5 19.300H11M2 24.500H15M1 29.500H24M20 24.500H23.500" stroke="#e5cd86" stroke-width="2.600" stroke-linecap="round"/>
          <path d="M12 18.200H22M3 21.800H26M3 27.200H26" stroke="#f5dfa0" stroke-width=".9" opacity=".8"/>
          <circle cx="23.800" cy="10.500" r="9.800" fill="#c42b1c"/><text x="23.800" y="15.500" fill="#fff" font-size="14" font-weight="500" text-anchor="middle">9</text>`)}
        <div class="words">34°C<br /><span class="grey">Haze</span></div>
      </div>
      <div class="start">${START}</div>
      <div class="search">
        ${icon(19, 19, "0 0 19 19", svg`<circle cx="8.300" cy="8" r="6.900" fill="none" stroke="#262626" stroke-width="1.900"/><path d="M13.300 13.200 17.500 17.500" stroke="#262626" stroke-width="2.300" stroke-linecap="round"/>`)}
        <span>Search</span>
      </div>
      <div class="apps">${apps.map((a) => html`<div class="app ${a.kind ?? ""}">${a.art}${a.kind === "chat" ? html`<span class="badge">26</span>` : ""}</div>`)}</div>
      <div class="tray">
        ${icon(14, 9, "0 0 14 9", svg`<path d="M1 8 7 2 13 8" fill="none" stroke="#1b1b1b" stroke-width="1.700" stroke-linecap="round" stroke-linejoin="round"/>`)}
        <div class="lang">ENG<br />IN</div>
        <div class="net">
          ${icon(20, 15, "0 0 20 15", svg`<g fill="none" stroke="#1b1b1b" stroke-width="1.400" stroke-linecap="round"><path d="M.8 5.500Q10-3.500 19.200 5.500M3.500 8.300Q10 2 16.500 8.300M6.200 11Q10 7.400 13.800 11"/></g><circle cx="10" cy="13" r="1.800" fill="#1b1b1b"/>`)}
          ${icon(20, 17, "0 0 20 17", svg`<g fill="none" stroke="#1b1b1b" stroke-width="1.300" stroke-linecap="round" stroke-linejoin="round"><path d="M.8 5.700H3.800L8 1.800V15.200L3.800 11.300H.8Z"/><path d="M10.800 5.800Q12.500 8.500 10.800 11.200M13.500 3.500Q17 8.500 13.500 13.500M16 1Q21.500 8.500 16 16"/></g>`)}
          ${icon(20, 13, "0 0 20 13", svg`<rect x=".8" y=".8" width="16" height="11.400" rx="2.200" fill="none" stroke="#1b1b1b" stroke-width="1.500"/><rect x="3" y="3" width="5.800" height="7" fill="#1b1b1b"/><path d="M17.500 4.500H18.500Q19.500 4.500 19.500 5.500V7.500Q19.500 8.500 18.500 8.500H17.500Z" fill="#1b1b1b"/>`)}
        </div>
        <div class="clock">16:27<br />28-08-2025</div>
        ${icon(17, 19, "0 0 17 19", svg`<g fill="none" stroke="#1b1b1b" stroke-width="1.400" stroke-linejoin="round" stroke-linecap="round"><path d="M9 1.200Q3.300 1.200 3.300 7V11.500L1 15.200H15.500L13.800 11.500V10.500"/><path d="M6 16Q8.200 19.500 10.500 16"/><path d="M7 6.500H10.500L7 11H10.500M12.200 1H16L12.200 5.600H16"/></g>`)}
      </div>
    </div>`;
  }

  render() {
    return html`<div class="screen">
      <div class="tabs">
        ${tabs.map((t, i) => this.tab(t, i))}
        <span class="plus">${icon(14, 14, "0 0 14 14", svg`<path d="M7 .5V13.500M.5 7H13.500" stroke="#5a5b60" stroke-width="1.700"/>`)}</span>
        <div class="win">
          ${icon(13, 13, "0 0 13 13", svg`<path d="M0 6H13" stroke="#111" stroke-width="1.200"/>`)}
          ${icon(13, 13, "0 0 13 13", svg`<rect x=".6" y="2.600" width="9.800" height="9.800" rx="1.200" fill="none" stroke="#111" stroke-width="1.200"/><path d="M3.200.6H10Q12.400.6 12.400 3V9.800" fill="none" stroke="#111" stroke-width="1.200"/>`)}
          ${icon(13, 13, "0 0 13 13", svg`<path d="M.3.3 12.700 12.700M12.700.3.3 12.700" stroke="#111" stroke-width="1.200"/>`)}
        </div>
      </div>
      ${this.toolbar()}
      <div class="marks">
        ${icon(18, 18, "0 0 18 18", GLOBE)}<span>New Tab</span>${icon(18, 18, "0 0 18 18", GLOBE)}
      </div>
      <div class="page">
        <div class="body">
          <div class="card">
            <h1>Enter Your Health Data</h1>
            <p class="lead">Please provide the following details for Diabetes prediction:</p>
            ${fields.map((f) => html`<div class="row ${f.kind}">
              <div class="label">${f.art}<span>${f.name}</span></div>
              <div class="input"><span>${f.value}</span>${f.kind === "insulin"
                ? html`<span class="spin">${icon(18, 30, "0 0 18 30", svg`<path d="M9 3.500 13 9.300H5Z" fill="#8b8b8b" stroke="#8b8b8b" stroke-width="1" stroke-linejoin="round"/><path d="M9 26.500 13 20.500H5Z" fill="#8b8b8b" stroke="#8b8b8b" stroke-width="1" stroke-linejoin="round"/>`)}</span>` : ""}</div>
              <div class="info">${INFO}</div>
              <div class="range">${f.range}</div>
            </div>`)}
            <div class="btn go">Predict</div>
            <div class="btn home">Back to Home</div>
          </div>
        </div>
        <div class="scroll">
          ${icon(12, 10, "0 0 12 10", svg`<path d="M6 1 11.300 9H.7Z" fill="#8b8b8b" stroke="#8b8b8b" stroke-linejoin="round"/>`)}
          <div class="thumb"></div>
          <span class="down">${icon(12, 10, "0 0 12 10", svg`<path d="M6 9 11.300 1H.7Z" fill="#8b8b8b" stroke="#8b8b8b" stroke-linejoin="round"/>`)}</span>
        </div>
      </div>
      ${this.taskbar()}
    </div>`;
  }
}
